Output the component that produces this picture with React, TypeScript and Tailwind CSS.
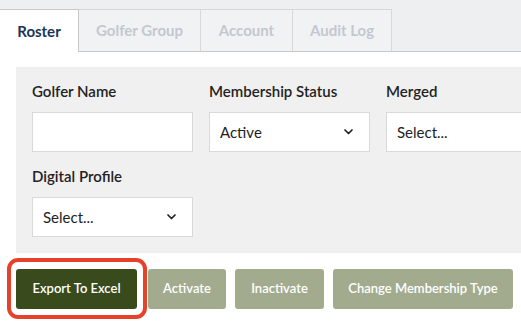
import React from "react";

const Chevron = () => (
  <svg width="9" height="6" viewBox="0 0 9 6" className="shrink-0">
    <path d="M1 1 L4.5 4.5 L8 1" fill="none" stroke="#222" strokeWidth="1.7" strokeLinecap="round" strokeLinejoin="round" />
  </svg>
);

const Select = ({ value }: { value: string }) => (
  <div className="w-[161px] h-[40px] bg-white border border-[#d9d9d9] flex items-center justify-between pl-[10px] pr-[16px] text-[15px] text-[#222]">
    <span>{value}</span>
    <Chevron />
  </div>
);

const Field = ({ label, children }: { label: string; children: React.ReactNode }) => (
  <div className="flex flex-col gap-[11px] w-[161px] shrink-0">
    <div className="text-[15px] leading-[20px] font-semibold text-[#222]">{label}</div>
    {children}
  </div>
);

export default function App() {
  const tabs = ["Golfer Group", "Account", "Audit Log"];
  const widths = ["w-[122px]", "w-[92px]", "w-[99px]"];
  return (
    <div className="w-[521px] h-[324px] bg-white overflow-hidden" style={{ fontFamily: "Lato, 'Open Sans', sans-serif" }}>
      <div className="bg-[#eeeff1] pt-[9px] flex border-b border-[#c8c8c8] h-[52px]">
        <div className="w-[79px] h-[43px] -mb-px bg-white border-t border-r border-[#c8c8c8] flex items-center justify-center text-[15px] font-bold text-[#1b3556]">
          Roster
        </div>
        {tabs.map((t, i) => (
          <div
            key={t}
            className={`${widths[i]} h-[42px] bg-[#f1f2f4] border-t border-r border-[#d8d8d8] flex items-center justify-center text-[15px] font-bold text-[#c3c8d0]`}
          >
            {t}
          </div>
        ))}
      </div>
      <div className="pl-4 pt-[15px]">
        <div className="bg-[#f0f0f0] pl-4 pt-[14px] pb-4 flex flex-col gap-[14px]">
          <div className="flex gap-4">
            <Field label="Golfer Name">
              <div className="w-[161px] h-[40px] bg-white border border-[#d9d9d9]" />
            </Field>
            <Field label="Membership Status">
              <Select value="Active" />
            </Field>
            <Field label="Merged">
              <Select value="Select..." />
            </Field>
          </div>
          <div className="flex gap-4">
            <Field label="Digital Profile">
              <Select value="Select..." />
            </Field>
          </div>
        </div>
        <div className="flex mt-4 text-[13px] font-semibold text-white">
          <div className="relative">
            <div className="h-[40px] w-[121px] rounded-[3px] bg-[#394a1c] flex items-center justify-center">Export To Excel</div>
            <div className="absolute left-[-9px] top-[-11px] w-[140px] h-[61px] rounded-[11px] border-[4px] border-[#e8412b] pointer-events-none" />
          </div>
          <div className="ml-[11px] h-[40px] w-[78px] rounded-[3px] bg-[#a3ab8f] flex items-center justify-center">Activate</div>
          <div className="ml-[9px] h-[40px] w-[89px] rounded-[3px] bg-[#a3ab8f] flex items-center justify-center">Inactivate</div>
          <div className="ml-[9px] h-[40px] w-[180px] rounded-[3px] bg-[#a3ab8f] flex items-center justify-center">Change Membership Type</div>
        </div>
      </div>
    </div>
  );
}
